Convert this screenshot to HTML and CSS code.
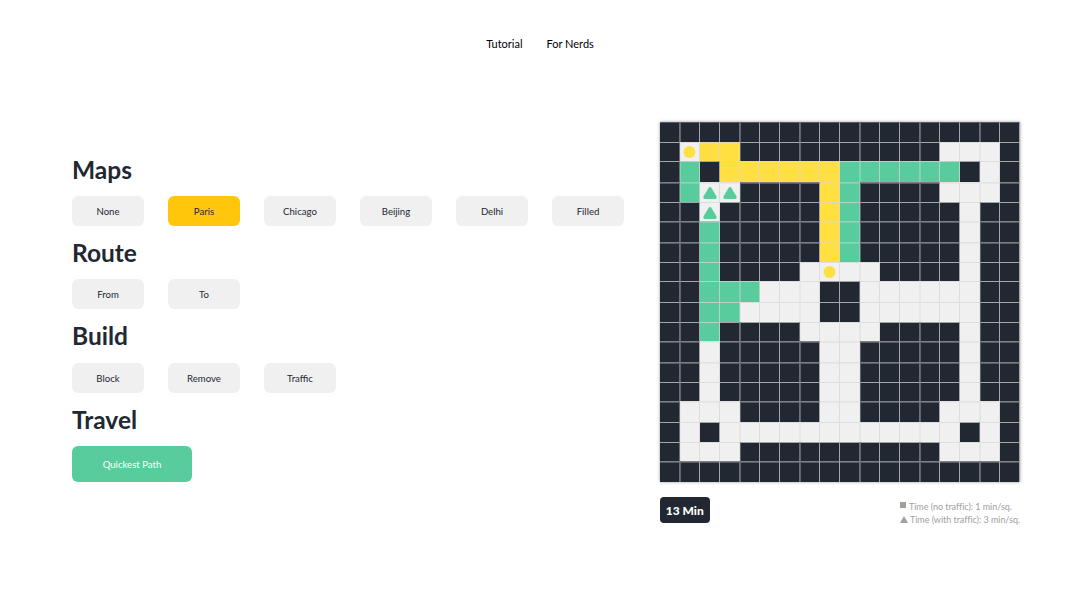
FILE: index.html
```
<!DOCTYPE html>
<html lang="en">
<head>
<meta charset="utf-8">
<title>Quickest Path</title>
<link rel="stylesheet" href="styles.css">
</head>
<body>
<nav class="nav"><a>Tutorial</a><a>For Nerds</a></nav>
<main class="main">
  <section class="controls">
    <h2>Maps</h2>
    <div class="row"><button>None</button><button class="active">Paris</button><button>Chicago</button><button>Beijing</button><button>Delhi</button><button>Filled</button></div>
    <h2>Route</h2>
    <div class="row"><button>From</button><button>To</button></div>
    <h2>Build</h2>
    <div class="row"><button>Block</button><button>Remove</button><button>Traffic</button></div>
    <h2>Travel</h2>
    <div class="row"><button class="go">Quickest Path</button></div>
  </section>
  <section class="board">
    <div class="grid" id="grid"></div>
    <div class="info">
      <div class="time">13 Min</div>
      <div class="legend">
        <div><svg class="square" viewBox="0 0 6 6"><path d="M0 0h6v6H0z"/></svg><span>Time (no traffic): 1 min/sq.</span></div>
        <div><svg class="triangle" viewBox="0 0 8 7"><path d="M4 0l4 7H0z"/></svg><span>Time (with traffic): 3 min/sq.</span></div>
      </div>
    </div>
  </section>
</main>
<script src="grid.js"></script>
</body>
</html>
```
FILE: styles.css
```
* { box-sizing: border-box; }
body { margin: 0; height: 590px; overflow: hidden; background: #fff; color: #222831; font-family: Lato, sans-serif; }
.nav { display: flex; justify-content: center; gap: 24px; padding-top: 36px; height: 122px; font-size: 11px; line-height: 16px; color: #000; }
.main { display: flex; justify-content: space-between; padding: 0 60px 0 72px; }
.controls { width: 552px; padding-top: 32.6px; }
h2 { margin: 0 0 11.4px; font-size: 24.5px; line-height: 30px; font-weight: 700; }
.row { display: flex; gap: 24px; margin-bottom: 12px; }
button { width: 72px; height: 30px; padding: 1px 0 0; border: 0; border-radius: 6px; background: #f0f0f0; color: #222831; font: 400 9.6px/29px Lato, sans-serif; }
.active { background: #ffc60b; }
.go { width: 120px; height: 36px; background: #58cc9c; color: #fff; }
.board { width: 360px; }
.grid { display: grid; grid-template-columns: repeat(18, 20px); grid-template-rows: repeat(6, 20px 19px 21px); box-shadow: 0 0 3px rgba(0, 0, 0, .4); }
.cell { border-top: 1px solid rgba(215, 215, 215, .72); border-right: 1px solid rgba(215, 215, 215, .72); background: #f0f0f0; }
.cell:nth-child(3n+1) { border-right-color: rgba(215, 215, 215, .42); }
.cell:nth-child(3n+2) { border-left: 1px solid rgba(215, 215, 215, .35); }
.cell:nth-child(-n+18) { border-top-color: rgba(215, 215, 215, .3); }
.soft { border-top-color: rgba(215, 215, 215, .5); box-shadow: inset 0 1px rgba(215, 215, 215, .3); }
.wall { background: #222831; }
.path { background: #ffe040; }
.seen { background: #58cc9c; }
.cell svg { display: block; width: 19px; height: 19px; }
.cell:nth-child(3n+2) svg { margin-left: -1px; }
.point { fill: #ffe040; }
.traffic { fill: #58cc9c; stroke: #58cc9c; stroke-width: 3.4; stroke-linejoin: round; }
.info { display: flex; justify-content: space-between; padding-top: 15px; }
.time { width: 49.5px; height: 26px; border-radius: 4px; background: #222831; color: #fff; font-size: 12px; line-height: 27px; font-weight: 900; text-align: center; }
.legend { padding-top: 3px; color: #a0a0a0; font-size: 9px; letter-spacing: -.04px; line-height: 13px; white-space: nowrap; }
.legend div { display: flex; align-items: center; gap: 3px; height: 13px; }
.legend div + div { gap: 2px; }
.legend svg { fill: #a0a0a0; }
.square { width: 6px; height: 6px; margin-bottom: 3px; }
.triangle { width: 8px; height: 7px; }
```
FILE: grid.js
```
// # wall, . road, Y route, G visited, o endpoint, t traffic
const rows = [
  "##################",
  "#oYY##########...#",
  "#G#YYYYYYGGGGGG#.#",
  "#Gtt####YG####...#",
  "##t#####YG#####.##",
  "##G#####YG#####.##",
  "##G#####YG#####.##",
  "##G####.o..####.##",
  "##GGG...##......##",
  "##GG....##......##",
  "##G####....####.##",
  "##.#####..#####.##",
  "##.#####..#####.##",
  "##.#####..#####.##",
  "#...####..####...#",
  "#.#............#.#",
  "#...##########...#",
  "##################"
];
const kinds = { "#": "wall", "Y": "path", "G": "seen" };
const softRows = [3, 5, 6, 11, 12, 14, 17];
const icons = {
  o: '<svg viewBox="0 0 19 19"><circle class="point" cx="9.5" cy="8.9" r="6"/></svg>',
  t: '<svg viewBox="0 0 19 19"><path class="traffic" d="M10 5.8L15 14.2H5z"/></svg>'
};
document.getElementById("grid").innerHTML = rows.map((row, y) => row.split("").map(c =>
  `<div class="cell ${kinds[c] || ""} ${softRows.includes(y) ? "soft" : ""}">${icons[c] || ""}</div>`).join("")).join("");
```
